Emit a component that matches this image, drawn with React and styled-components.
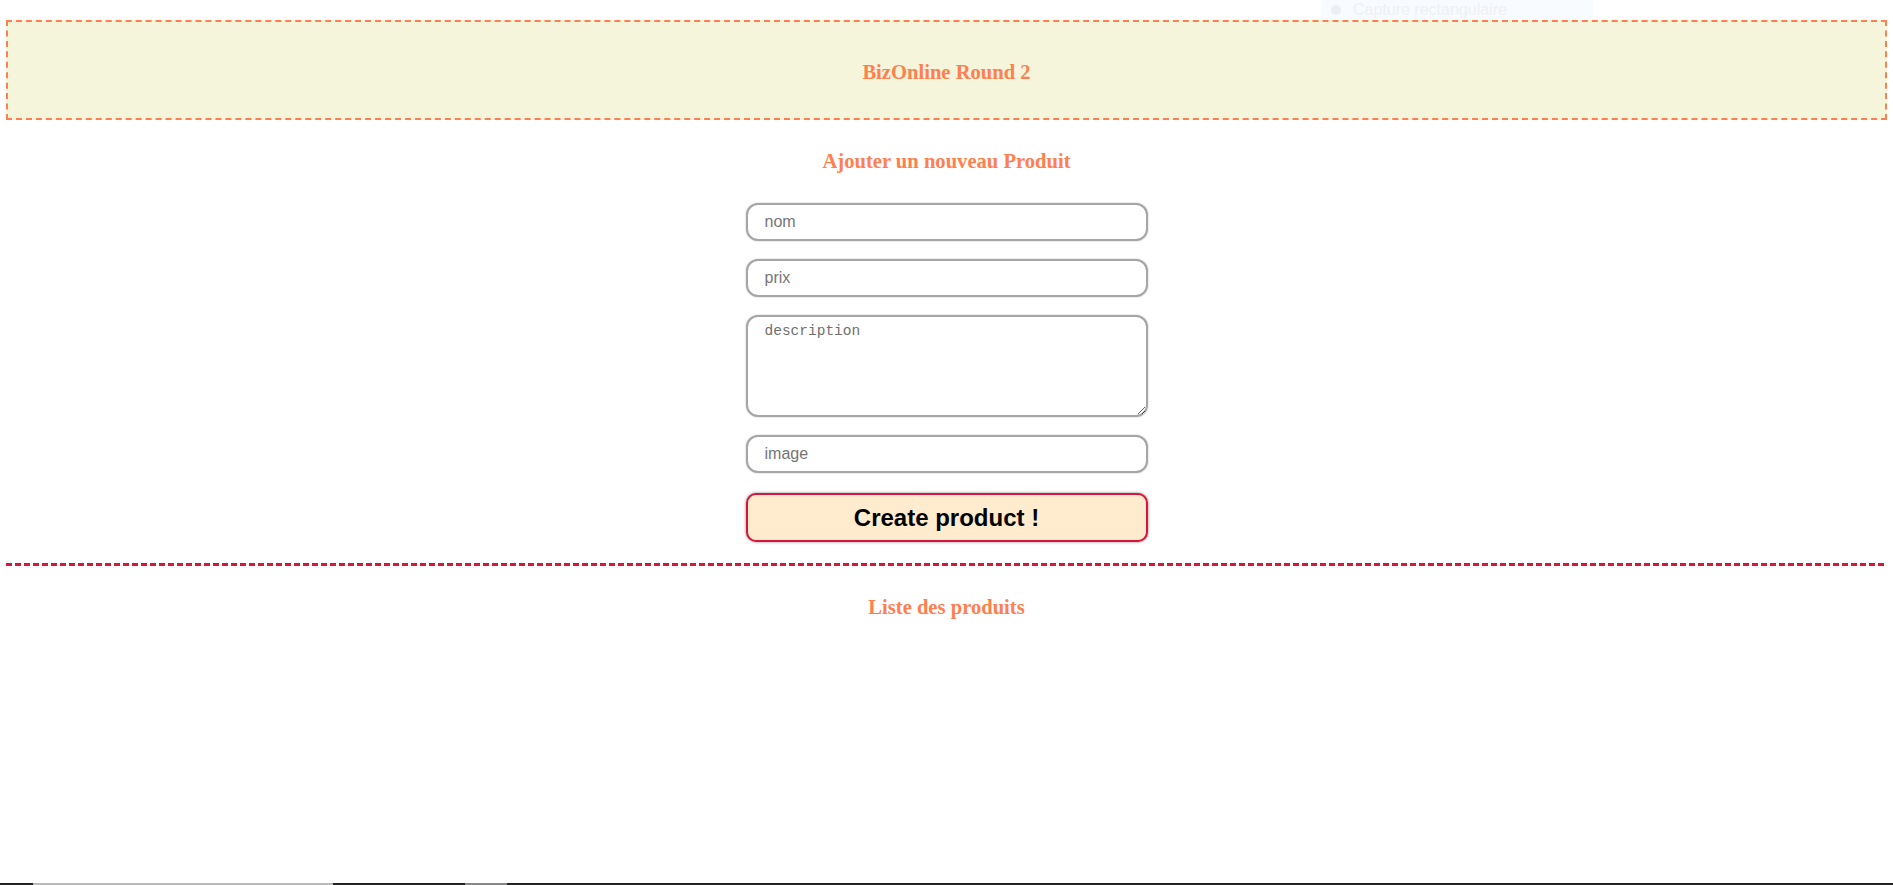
import React from "react";
import styled, { createGlobalStyle } from "styled-components";

const Global = createGlobalStyle`
  html, body { margin: 0; padding: 0; background: #fff; }
  body { font-family: "Liberation Serif", "Times New Roman", serif; }
`

const Page = styled.div`
  min-height: 885px;
  padding: 20px 6px 0;
  box-sizing: border-box;
  display: flex;
  flex-direction: column;
`

const Header = styled.header`
  height: 100px;
  box-sizing: border-box;
  background: #f5f5dc;
  border: 2px dashed #ff7f50;
  display: flex;
  align-items: center;
  justify-content: center;
  padding-top: 4px;
`

const Title = styled.h3`
  margin: ${p => p.$m || "0"};
  font-size: 20.6px;
  font-weight: bold;
  color: #ff7f50;
  text-align: center;
  line-height: 24px;
`

const Form = styled.form`
  width: 402px;
  margin: 30px auto 0;
  display: flex;
  flex-direction: column;
  gap: 18px;
`

const Field = styled.input`
  height: 38px;
  box-sizing: border-box;
  border: 2px solid #a6a6a6;
  border-radius: 12px;
  box-shadow: 0 0 2px rgba(0,0,0,.25);
  padding: 0 17px;
  font-family: "Liberation Sans", Arial, sans-serif;
  font-size: 16px;
  outline: none;
  &::placeholder { color: #757575; }
`

const Area = styled.textarea`
  height: 102px;
  box-sizing: border-box;
  border: 2px solid #a6a6a6;
  border-radius: 12px;
  box-shadow: 0 0 2px rgba(0,0,0,.25);
  padding: 6px 17px;
  font-family: "Liberation Mono", "DejaVu Sans Mono", monospace;
  font-size: 14.5px;
  outline: none;
  &::placeholder { color: #6f6f6f; }
`

const Submit = styled.button`
  margin-top: 2px;
  height: 49px;
  border: 2px solid #dc143c;
  border-radius: 10px;
  background: #ffebcd;
  box-shadow: 0 0 3px rgba(0,0,0,.5);
  font-family: "Liberation Sans", Arial, sans-serif;
  font-size: 24px;
  font-weight: bold;
  color: #000;
  cursor: pointer;
`

const Rule = styled.div`
  margin-top: 21px;
  height: 3px;
  background: repeating-linear-gradient(to right, #dc143c 0 6px, transparent 6px 9px);
`

const Capture = styled.div`
  position: fixed;
  top: 0;
  left: 1321px;
  width: 272px;
  height: 20px;
  background: #f8fbff;
  display: flex;
  align-items: center;
  gap: 12px;
  padding-left: 10px;
  box-sizing: border-box;
  font-family: "Liberation Sans", Arial, sans-serif;
  font-size: 16px;
  color: #eef0f3;
  overflow: hidden;
`

const Dot = styled.span`
  width: 10px;
  height: 10px;
  border-radius: 50%;
  background: #eceff2;
`

const BottomStrip = styled.div`
  position: fixed;
  left: 0;
  right: 0;
  bottom: 0;
  height: 2px;
  background: linear-gradient(to right, #222 0 33px, #bbb 33px 333px, #222 333px 465px, #888 465px 507px, #222 507px 100%);
`

export default function App() {
  return <Page>
    <Global/>
    <Header>
      <Title>BizOnline Round 2</Title>
    </Header>

    <Title $m="29px 0 0">Ajouter un nouveau Produit</Title>

    <Form onSubmit={e => e.preventDefault()}>
      <Field type="text" placeholder="nom"/>
      <Field type="text" placeholder="prix"/>
      <Area placeholder="description"/>
      <Field type="text" placeholder="image"/>
      <Submit type="submit">Create product !</Submit>
    </Form>

    <Rule/>

    <Title $m="29px 0 0">Liste des produits</Title>

    <Capture><Dot/>Capture rectangulaire</Capture>
    <BottomStrip/>
  </Page>
}
